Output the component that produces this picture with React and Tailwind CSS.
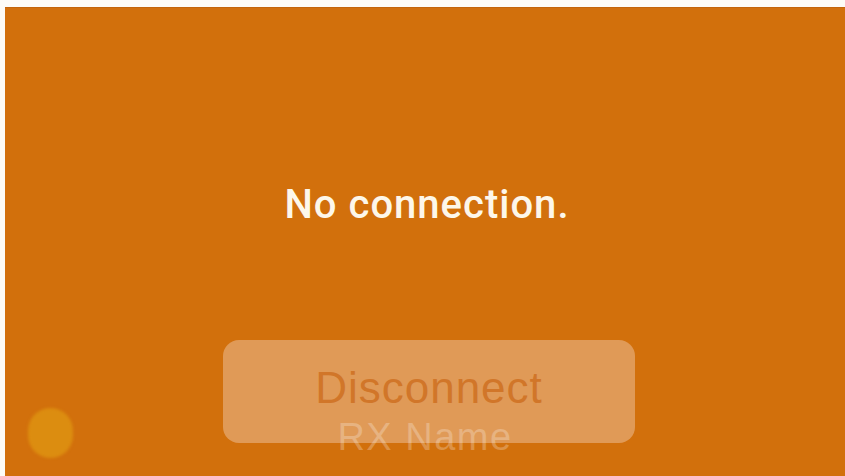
import React from 'react';

// Écran "pas de connexion" : fond orange, bouton désactivé en bas
const App = () => {
  return (
    <div className="w-[845px] h-[476px] bg-[#fdfcf7] pt-[7px] pl-[5px] overflow-hidden">
      <div className="relative h-[469px] w-full bg-[#d2700c] border-t border-[#c4650a] flex flex-col items-center">
        <p
          className="pt-[177px] ml-[4px] text-[40px] leading-none font-medium text-[#fdf7ea] tracking-[1px]"
          style={{ fontFamily: "Roboto, 'Liberation Sans', sans-serif" }}
        >
          No connection.
        </p>

        <div className="mt-[115px] ml-[8px] w-[412px] h-[103px] rounded-[16px] bg-[#e09a57] flex items-center justify-center pb-[8px]">
          <span
            className="text-[44px] leading-none text-[#d17629] tracking-[1px]"
            style={{ fontFamily: "'Liberation Sans', Arial, sans-serif" }}
          >
            Disconnect
          </span>
        </div>

        <p
          className="-mt-[25px] text-[38px] leading-none text-white/25 tracking-[1.5px]"
          style={{ fontFamily: "'Liberation Sans', Arial, sans-serif" }}
        >
          RX Name
        </p>

        {/* Pastille d'état */}
        <div className="absolute left-[23px] top-[400px] w-[45px] h-[50px] rounded-full bg-[#dc8d10] blur-[1.5px]" />
      </div>
    </div>
  );
};

export default App;
